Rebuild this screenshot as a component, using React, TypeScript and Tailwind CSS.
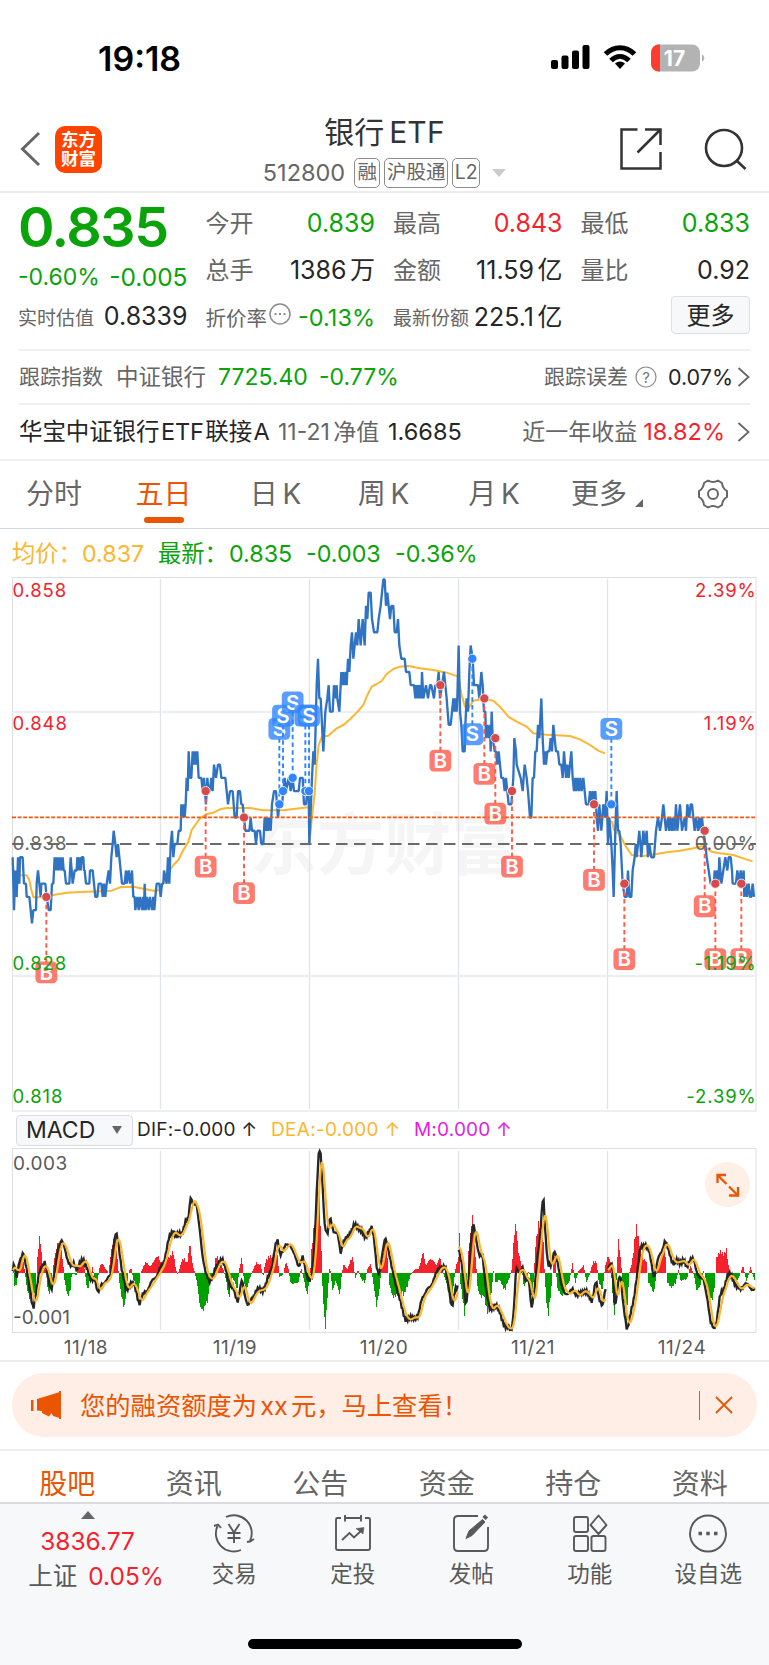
import type { ReactNode } from 'react'

const FONT = "font-['Inter','Noto_Sans_CJK_SC',sans-serif]"

type Point = [number, number]

// "x,y x,y ..." -> pairs, shifted horizontally
function parse(data: string, dx = 0): Point[] {
  return data.trim().split(/\s+/).map((p) => {
    const [x, y] = p.split(',').map(Number)
    return [x + dx, y] as Point
  })
}

// chart units: 3 per pixel. One price tick (0.001) is 39.7 units
const TICK = 39.7
const PRICE_ZERO = 804

const price = [
  ...parse(`38,-1 42,-5 46,-2 50,-4 54,-1 58,-3 60,-1 68,-1 72,-3 78,-3 80,-4 88,-4 92,-5 96,-6 100,-5 108,-5 110,-3 114,-2 118,-3 122,-4 124,-3 136,-3 140,-4 146,-5 152,-5 156,-3
  160,-3 164,-1 167,-2 170,-1 173,-2 176,-1 179,-2 182,-1 185,-2 188,-1 191,-2 194,-2 198,-3 208,-3 212,-1 218,-3 224,-2 230,-2 232,-1 236,-2 239,-1 242,-2 245,-1 250,-1 252,-2 254,-2 258,-3 268,-3 270,-2 278,-2
  282,-3 286,-4 292,-4 296,-3 304,-3 308,-4 312,-3 316,-4 320,-3 326,-2 330,-3 334,-1 338,0 341,1 346,0 350,-1 354,0 358,-1 362,-2 366,-3 374,-3 378,-2 380,-3 386,-2 390,-3 396,-2 400,-4 404,-4
  406,-5 412,-4 416,-5 420,-4 426,-5 429,-4 432,-5 434,-3 437,-5 441,-4 446,-5 450,-4 456,-5 460,-4 463,-5 466,-4 470,-3 478,-3 482,-4 486,-3 490,-3 492,-2 500,-3 504,-1 508,-3 512,0 516,1 520,-1 524,0 532,0 536,1
  542,1 544,3 547,2 550,3 554,2 557,3 560,5 563,4 566,7 570,5 574,5 578,7 582,6 585,7 588,6 592,7 596,5 604,5 608,4 612,5 615,4 618,3 622,5 626,4 630,4 634,5 638,4 642,6 648,5 654,6 660,6
  664,5 676,5 680,4 684,3 690,4 698,4 704,2 710,2 714,4 720,4 724,3 728,3 732,2 736,1 748,1 752,2 756,1 764,1 768,0 772,1 780,1 784,0 790,0 794,2 798,1 801,2 804,1 808,2 812,1 816,3 822,4
  828,4 834,2 838,3 846,3 850,4 854,5 858,4 866,5 872,4 878,5 882,4 896,4 900,5 908,5 912,3 918,3 922,4 926,4`),
  ...parse(`28,0 36,5 40,7 44,6 50,12 54,14 58,11 62,11 66,9 70,7 76,10 82,11 86,12 90,10 98,10 102,12 106,11 110,12 112,11 118,10 124,13 127,12 130,13 134,12 138,13 140,12 144,14 148,13 152,15 156,16 160,14 164,15
  168,16 172,15 176,17 182,15 188,17 194,15 198,18 202,17 206,19 212,19 216,17 222,16 232,16 236,17 242,18 246,19 250,20 254,20 258,18 262,19 266,18 270,17 274,18 280,18 284,16 290,16 294,17 298,15
  304,14 314,14 318,13 328,13 332,12 342,12 346,11 349,12 352,11 355,12 358,11 361,12 364,11 366,13 370,11 378,12 384,11 390,12 394,12 402,11 406,12 412,12 416,13 420,11 426,12 432,13 436,12 440,11 446,9 452,9 456,10
  460,11 463,10 466,11 470,10 472,11 476,15 480,10 484,9 488,7 494,7 496,9 500,11 504,10 508,13 512,15 518,14 522,12 534,12 538,11 544,13 548,12 552,10 556,10 558,8 562,9 566,8 570,9 572,7 575,10 578,8 584,7 588,7
  592,6 596,7 600,6 604,5 610,5 614,4 618,5 622,4 626,3 634,3 640,5 643,8 648,7 650,6 662,5 668,4 674,6 680,5 684,4 690,2`, 900),
  ...parse(`4,2 8,5 12,5 16,7 20,7 24,9 28,8 34,11 38,8 42,6 45,7 48,6 52,7 58,7 62,8 66,7 70,9 74,8 78,7 84,7 88,6 94,6 98,5 102,7 108,5 112,6 116,5 120,6 124,7 128,5 132,4 136,5 139,4 143,5 147,4 151,5 155,4 160,5
  164,4 168,3 176,3 180,4 184,3 188,4 192,3 196,4 200,2 204,1 208,3 214,1 220,3 226,2 230,4 234,0 238,2 244,0 248,-2 251,-4 256,1 260,4 264,1 268,1 272,0 278,-3 284,-4 290,-4 294,-2 298,-4 304,-4 308,-2 314,-1
  317,0 320,-1 324,0 328,1 334,-1 340,1 345,0 350,1 354,-1 358,0 364,-1 372,-1 378,1 384,2 390,1 396,2 400,3 404,2 408,1 414,2 418,1 422,2 426,1 430,2 434,1 438,3 442,1 446,2 450,3 456,1 464,2 468,1 472,3 478,2 482,3
  486,3 490,2 494,1 498,2 504,1 508,2 512,1 516,2 520,1 526,0 530,-1 536,-2 542,-3 552,-3 554,-2 558,-3 562,-2 565,-3 568,-1 574,-3 580,-2 586,-1 592,-2 596,-1 602,-1 606,-2 608,-3 618,-3 622,-2 628,-3 632,-2 637,-3 641,-2 643,-4
  648,-3 651,-4 656,-3 660,-4 664,-4 668,-3 672,-4`, 1590),
].map(([x, k]) => [x, PRICE_ZERO - k * TICK] as Point)

const average: Point[][] = [
  parse(`38,880 42,912 60,916 80,916 88,930 94,960 100,982 140,982 160,975 200,968 240,966 300,964 335,962 360,952 400,950 430,956 460,962 480,960 495,925 520,885 535,870 550,840 565,815 575,780 600,745
  620,732 640,728 660,718 680,714 750,714 790,721 850,721 880,717 925,712`),
  parse(`28,822 36,740 44,670 50,580 56,525 66,500 85,497 110,475 130,465 150,448 170,428 190,405 200,380 215,350 230,342 245,333 260,312 280,297 300,290 325,288 360,295 400,300 440,308 475,320
  485,375 495,410 505,415 520,392 550,386 580,392 600,410 625,440 650,455 680,470 700,490 740,494 810,498 840,508 870,525 895,542 915,550`, 900),
  parse(`232,750 246,755 252,780 270,795 285,825 305,855 340,858 375,853 410,847 450,842 490,835 520,828 545,845 570,850 610,855 640,865 668,874`, 1590),
].map((line) => line.map(([x, y]) => [x, y - 18] as Point))

const dif: Point[][] = [
  parse(`38,540 42,512 50,565 58,520 70,480 78,530 90,600 100,655 110,600 118,540 134,522 144,560 154,600 164,550 174,470 184,452 194,475 204,510 214,535 222,520 230,535 250,510 258,520 270,570 284,562
  294,615 304,580 320,575 332,550 340,470 348,430 356,465 366,540 378,605 390,580 400,580 410,610 418,640 430,615 444,595 460,570 476,545 490,520 506,450 520,420 530,440 545,430 556,395 565,390 572,318
  580,340 590,350 600,420 608,500 616,550 628,570 640,560 650,525 664,510 676,530 690,590 700,595 714,635 726,570 734,610 744,650 756,625 766,605 776,600 786,600 796,590 806,560 816,530 824,480 832,450
  840,490 850,480 860,465 870,460 880,490 896,525 908,505 918,545 928,572 936,560 944,450 952,260 957,180 961,185 966,260 974,400 982,435 990,385 1000,420 1012,430 1022,490 1030,450 1044,445 1060,405 1072,415
  1084,415 1096,450 1114,405 1122,450 1130,530 1138,550 1148,490 1156,440 1164,470 1176,540 1190,590 1204,650 1216,685 1226,690 1240,680 1254,685 1266,620 1276,610 1290,590 1305,560 1320,530 1336,535
  1346,590 1356,655 1366,600 1374,585`),
  parse(`236,470 246,530 258,650 266,560 272,470 280,400 286,430 298,500 308,500 320,610 330,665 345,640 360,670 378,715 396,715 403,640 408,540 420,545 428,530 436,580 446,560 455,655 464,600 472,500
  480,440 488,335 491,340 496,430 504,520 514,530 524,480 534,520 544,590 554,605 566,615 578,595 592,620 610,600 620,610 636,630 648,575 656,620 668,645 678,595`, 1140),
  parse(`683,540 688,520 696,520 705,660 716,560 722,560 730,650 741,718 750,680 760,640 770,560 780,480 796,460 808,490 822,560 834,510 846,480 855,450 864,480 880,520 892,515 900,515 910,510 920,535
  930,505 940,510 950,545 960,560 970,570 982,620 992,700 1001,718 1010,690 1020,620 1030,600 1042,555 1056,560 1070,590 1080,600 1094,580 1106,590 1124,598`, 1140),
]

const histogram = [
  ...parse(`38,0 40,30 44,-35 50,-35 54,0 58,40 70,35 76,0 80,-40 88,-75 96,-60 108,-70 110,0 114,60 120,105 128,25 134,15 140,0 144,-50 150,-55 158,0 164,50 174,85 184,80 192,10 194,-20 204,-65 212,-50
  216,0 230,-5 240,20 252,25 256,-5 264,-55 270,-20 278,15 284,-10 292,-50 298,15 304,25 312,20 326,0 334,60 346,120 354,30 358,-20 366,-70 374,-112 380,-40 386,0 394,15 402,-25 416,-50 422,0 436,30
  450,20 462,35 476,50 490,10 500,40 508,50 520,60 528,10 534,-5 546,35 554,40 562,30 570,90 578,25 584,5 590,-20 600,-90 612,-115 624,-80 630,-20 640,-10 648,50 662,30 672,5 680,-25 688,-75 696,-15
  706,-25 712,-50 718,10 726,50 732,-20 740,-55 750,-15 760,10 770,30 782,25 790,-10 798,40 808,50 820,40 832,75 838,-10 850,-5 858,35 866,10 872,-25 880,-35 896,-25 904,15 912,-20 922,-60 930,-20
  936,90 944,150 950,200 959,260 964,100 968,-40 976,-160 984,-60 990,25 998,-50 1008,-20 1020,-70 1026,0 1032,25 1042,10 1050,30 1060,45 1066,-20 1074,10 1084,-15 1096,-30 1102,10 1114,25 1120,-30
  1130,-95 1140,-40 1144,10`),
  ...parse(`8,40 16,100 24,30 28,-30 38,-75 50,-60 60,-60 72,-60 84,-35 92,-5 100,5 108,10 118,15 130,60 138,20 148,40 160,35 170,25 180,45 188,10 196,-20 206,-40 216,-100 224,-10 228,20 236,40 239,120
  242,-30 254,-125 262,-20 266,60 278,185 284,80 290,10 294,-50 304,-80 312,-60 324,-120 336,-50 342,15 348,-30 360,-20 376,-50 388,-15 396,10 402,100 408,165 416,60 426,15 432,-45 440,-25 448,10
  456,-80 462,-20 466,80 476,135 490,140 494,10 498,-60 505,-120 514,-60 520,30 526,50 532,-40 546,-75 558,-35 568,-30 578,30 586,-30 596,5 612,20 620,-30 632,5 640,30 650,35 656,-20 668,-50 676,20
  684,50 692,30 698,-60 705,-145 712,30 716,90 724,30 730,-60 741,-130 748,0 756,30 764,90 770,125 780,90 790,40 800,30 806,-30 822,-55 832,10 846,50 855,75 862,-30 874,-40 888,-30 896,10 902,-20
  920,-20 932,20 942,-5 950,-50 962,-35 972,10 980,-30 990,-70 997,-90 1004,-40 1010,40 1022,70 1032,50 1040,65 1048,10 1056,-10 1072,-25 1090,20 1100,-25 1112,15 1124,-20`, 1140),
]

function at(line: Point[], x: number) {
  if (x <= line[0][0]) return line[0][1]
  for (let i = 1; i < line.length; i++) {
    const [x0, y0] = line[i - 1]
    const [x1, y1] = line[i]
    if (x <= x1) return y0 + ((y1 - y0) * (x - x0)) / (x1 - x0)
  }
  return line[line.length - 1][1]
}

const noise = (x: number) => Math.sin(x * 1.7) * Math.cos(x * 0.63)

const toPath = (line: Point[]) => 'M' + line.map(([x, y]) => `${x.toFixed(1)} ${y.toFixed(1)}`).join('L')

function sample(line: Point[], step: number, fn: (x: number) => number) {
  const out: Point[] = []
  for (let x = line[0][0]; x <= line[line.length - 1][0]; x += step) out.push([x, fn(x)])
  return out
}

const difLines = dif.map((l) => sample(l, 3, (x) => Math.min(718, at(l, x) + noise(x) * 10)))
// signal line: trailing mean of the fast one
const deaLines = dif.map((l) =>
  sample(l, 3, (x) => {
    let sum = 0
    for (let i = 0; i < 8; i++) sum += at(l, x - i * 2)
    return sum / 8
  })
)

const bars = sample(histogram, 3, (x) => at(histogram, x) * (1 + 0.16 * noise(x)))

const dayLines = [160.5, 309.5, 458.5, 607.5]

type Marker = { kind: 'B' | 'S'; x: number; k: number; dir: 1 | -1 }

const markers: Marker[] = [
  ...[[139, -4], [617, 4], [732, 2], [1321, 12], [1453, 11], [1486, 8], [1536, 4], [1782, 3], [1873, -3], [2114, 1], [2146, -3], [2224, -3]].map(
    ([x, k]) => ({ kind: 'B', x, k, dir: 1 }) as Marker
  ),
  ...[[838, 3], [849, 4], [878, 5], [916, 4], [927, 4], [1834, 3]].map(([x, k]) => ({ kind: 'S', x, k, dir: -1 }) as Marker),
  { kind: 'S', x: 1417, k: 14, dir: 1 },
]

function TradeMarker({ kind, x, k, dir }: Marker) {
  const cx = x / 3
  const cy = (PRICE_ZERO - k * TICK) / 3
  const by = cy + dir * 75.5
  const buy = kind === 'B'
  const color = buy ? '#ff5a48' : '#2f86ff'
  return (
    <g>
      <line x1={cx} x2={cx} y1={cy} y2={by - dir * 10} stroke={color} strokeWidth="1.9" strokeDasharray="4.5 3.2" />
      <circle cx={cx} cy={cy} r="4.6" fill={buy ? '#d84a4a' : '#2f86ff'} stroke="#fff" strokeWidth="0.8" />
      <rect x={cx - 10.9} y={by - 10.9} width="21.8" height="21.8" rx="4.5" fill={color} opacity="0.8" />
      <text x={cx} y={by + 7.2} textAnchor="middle" fontSize="20.5" fontWeight="600" fill="#fff">{kind}</text>
    </g>
  )
}

function PriceChart() {
  return (
    <svg width="769" height="536" className={`block ${FONT}`} fontSize="18.5">
      <text x="250" y="293" fontSize="67" fontWeight="700" fill="#f5f5f5" textLength="268">东方财富</text>
      <rect x="12.5" y="1.5" width="743.5" height="533.5" fill="none" stroke="#dcdfe6" />
      {dayLines.map((x) => <line key={x} x1={x} x2={x} y1="3" y2="533" stroke="#e1e4ec" strokeWidth="1.3" />)}
      <path d="M12 136H756M12 400H756" stroke="#e6e9ef" strokeWidth="1.5" />
      <path d="M12 268H756" stroke="#6b6b6b" strokeWidth="2" strokeDasharray="11.5 6.5" />
      {average.map((l, i) => <path key={i} d={toPath(l)} transform="scale(.33333)" fill="none" stroke="#fcb62f" strokeWidth="6" strokeLinejoin="round" />)}
      <path d={toPath(price)} transform="scale(.33333)" fill="none" stroke="#2f73c2" strokeWidth="7" strokeLinejoin="bevel" />
      <path d="M12 241.4H756" stroke="#ee5a10" strokeWidth="1.9" strokeDasharray="4 1.6" />
      {markers.map((m, i) => <TradeMarker key={i} {...m} />)}
      <g fill="#f5222d" letterSpacing="0.85">
        <text x="12.5" y="20.5">0.858</text>
        <text x="12.5" y="154">0.848</text>
        <text x="756.5" y="20.5" textAnchor="end">2.39%</text>
        <text x="756.5" y="154" textAnchor="end">1.19%</text>
      </g>
      <g fill="#666" letterSpacing="0.85">
        <text x="12.5" y="273.5">0.838</text>
        <text x="756.5" y="273.5" textAnchor="end">0.00%</text>
      </g>
      <g fill="#0aa30a" letterSpacing="0.85">
        <text x="12.5" y="394">0.828</text>
        <text x="12.5" y="527">0.818</text>
        <text x="756.5" y="394" textAnchor="end">-1.19%</text>
        <text x="756.5" y="527" textAnchor="end">-2.39%</text>
      </g>
    </svg>
  )
}

function MacdChart() {
  return (
    <svg width="769" height="212" className={`block ${FONT}`} fontSize="19">
      <rect x="12.5" y="0.5" width="743.5" height="184" fill="none" stroke="#dcdfe6" />
      {dayLines.map((x) => <line key={x} x1={x} x2={x} y1="3" y2="182" stroke="#e1e4ec" strokeWidth="1.3" />)}
      <g transform="translate(0,-58) scale(.33333)">
        {bars.map(([x, v], i) => (
          <rect key={i} x={x - 2} y={v > 0 ? 548 - v : 548} width="3.6" height={Math.abs(v) + 2} fill={v > 0 ? '#f5222d' : '#00a000'} shapeRendering="crispEdges" />
        ))}
        {difLines.map((l, i) => <path key={i} d={toPath(l)} fill="none" stroke="#262626" strokeWidth="7" />)}
        {deaLines.map((l, i) => <path key={i} d={toPath(l)} fill="none" stroke="#fcb62f" strokeWidth="6.5" strokeLinejoin="round" />)}
      </g>
      <g fill="#595959">
        <text x="13" y="22" letterSpacing="0.5">0.003</text>
        <text x="13" y="176">-0.001</text>
        {['11/18', '11/19', '11/20', '11/21', '11/24'].map((d, i) => (
          <text key={d} x={86 + i * 149} y="206" textAnchor="middle" letterSpacing="0.5">{d}</text>
        ))}
      </g>
      <circle cx="727.5" cy="36.5" r="22.5" fill="#feefe7" />
      <path d="M717.5 35V27H726M717.5 27L726.500 36M738 39V47.500H729M738 47.500L729 38.500" fill="none" stroke="#ea5504" strokeWidth="2.300" />
    </svg>
  )
}

function Stat({ label, small, children, color = 'text-[#262626]' }: { label: string; small?: boolean; children: ReactNode; color?: string }) {
  return (
    <div className="flex h-[47px] items-center justify-between whitespace-nowrap">
      <span className={`text-[#666] ${small ? 'pt-1 text-[19px]' : 'text-[24px]'}`}>{label}</span>
      <span className={`text-[25px] [word-spacing:-3.5px] ${color}`}>{children}</span>
    </div>
  )
}

function Chevron() {
  return (
    <svg width="13" height="20" viewBox="0 0 13 20" fill="none" stroke="#666" strokeWidth="1.8"><path d="M1.500 1L11.500 10L1.500 19" /></svg>
  )
}

function StatusBar() {
  return (
    <div className="flex h-[104px] items-center pt-[12px] pl-[98px]">
      <span className="w-[453px] text-[34px] font-semibold text-black">19:18</span>
      <svg width="154" height="28" viewBox="0 0 154 28">
        <rect x="0" y="16" width="7" height="9" rx="2" />
        <rect x="10.5" y="11.5" width="7" height="13.5" rx="2" />
        <rect x="21" y="6.5" width="7" height="18.5" rx="2" />
        <rect x="31.5" y="1" width="7" height="24" rx="2" />
        <g fill="none" stroke="#000" strokeWidth="5">
          <path d="M54.500 10C63 1.500 75 1.500 83.500 10" />
          <path d="M60 16.500C65.500 11 72.500 11 78 16.500" />
        </g>
        <path d="M69 25L64 19.500C67 16.700 71 16.700 74 19.500Z" />
        <rect x="100" y="0.5" width="49" height="27" rx="8" fill="#b3b3b3" />
        <path d="M109 .5H108A8 8 0 0 0 100 8.500V19.500A8 8 0 0 0 108 27.500H109Z" fill="#ff3b30" />
        <path d="M151 10.500C154 11.500 154 16.500 151 17.500Z" fill="#b3b3b3" />
        <text x="123.500" y="21.500" fontSize="21" fontWeight="700" fill="#fff" textAnchor="middle">17</text>
      </svg>
    </div>
  )
}

function Header() {
  const tag = 'flex h-[30px] items-center justify-center rounded-[5px] border border-[#8c8c8c] text-[19.5px]'
  return (
    <header className="grid h-[89px] grid-cols-[1fr_auto_1fr] items-center border-b-2 border-[#eee]">
      <div className="flex items-center gap-3.5 pl-5">
        <svg width="21" height="36" viewBox="0 0 20 36" fill="none" stroke="#666" strokeWidth="3"><path d="M18.500 2L2 18L18.500 34" /></svg>
        <div className="flex h-[47px] w-[47px] flex-col items-center justify-center rounded-[10px] bg-[#ff4400] text-[17.5px] leading-[19px] font-bold text-white">
          <span>东方</span>
          <span>财富</span>
        </div>
      </div>
      <div className="flex flex-col items-center pt-[9px] text-[#666]">
        <h1 className="flex h-[38px] items-center gap-[5px] text-[30px] text-[#333]">银行<span className="tracking-[0.2px]">ETF</span></h1>
        <div className="flex h-[43px] items-center gap-1">
          <span className="mr-[5px] text-[23.5px]">512800</span>
          <span className={`${tag} w-[26px]`}>融</span>
          <span className={`${tag} w-[64px]`}>沪股通</span>
          <span className={`${tag} w-[28px]`}>L2</span>
          <svg width="14" height="8" className="ml-2"><path d="M0 0H14L7 8Z" fill="#ccc" /></svg>
        </div>
      </div>
      <div className="flex items-center justify-end gap-[42px] pr-[22px]">
        <svg width="42" height="42" viewBox="0 0 42 42" fill="none" stroke="#333" strokeWidth="2.5">
          <path d="M17.500 1.500H1.500V40.500H40.500V24M25 1.500H40.500V17M40.500 1.500L17.500 24.500" />
        </svg>
        <svg width="43" height="42" viewBox="0 0 43 42" fill="none" stroke="#333" strokeWidth="2.6">
          <circle cx="20" cy="20" r="18" /><path d="M32.500 32.500L41.500 41" />
        </svg>
      </div>
    </header>
  )
}

function Quote() {
  const green = 'text-[#0aa30a]'
  const red = 'text-[#f5222d]'
  return (
    <section className="px-[19px]">
      <div className="grid h-[156px] grid-cols-4 gap-x-[19px] pt-[7px]">
        <div className="-ml-px">
          <div className={`h-[56px] text-[55.5px] leading-[54px] font-semibold tracking-[-1.5px] ${green}`}>0.835</div>
          <div className={`flex h-[42px] items-center justify-between text-[23px] whitespace-nowrap ${green}`}><span>-0.60%</span><span className="text-[24.5px]">-0.005</span></div>
          <div className="flex h-[38px] items-center justify-between whitespace-nowrap">
            <span className="pt-1 text-[19px] text-[#666]">实时估值</span>
            <span className="text-[25px] text-[#262626]">0.8339</span>
          </div>
        </div>
        <div className="-ml-px">
          <Stat label="今开" color={green}>0.839</Stat>
          <Stat label="总手">1386 万</Stat>
          <div className="flex h-[47px] items-center justify-between whitespace-nowrap">
            <span className="flex pt-1 text-[20.5px] text-[#666]">
              折价率
              <svg width="24" height="24" viewBox="0 0 24 24" className="-mt-0.5" fill="none" stroke="#8c8c8c" strokeWidth="1.5">
                <circle cx="13" cy="12" r="10" />
                <path d="M7.500 12H9.500M12 12H14M16.500 12H18.500" strokeWidth="2" />
              </svg>
            </span>
            <span className={`text-[23.5px] ${green}`}>-0.13%</span>
          </div>
        </div>
        <div className="-ml-px">
          <Stat label="最高" color={red}>0.843</Stat>
          <Stat label="金额">11.59 亿</Stat>
          <Stat label="最新份额" small>225.1 亿</Stat>
        </div>
        <div className="-ml-px">
          <Stat label="最低" color={green}>0.833</Stat>
          <Stat label="量比">0.92</Stat>
          <div className="flex justify-end pt-[2px]">
            <button className="h-[38px] w-[79px] rounded-[4px] border border-[#dcdfe6] bg-[#f7f8fa] text-[24px] leading-[38px] text-[#262626]">更多</button>
          </div>
        </div>
      </div>
      <div className="flex h-[54px] items-center border-t-2 border-[#f0f0f0] text-[22.5px] whitespace-nowrap text-[#666]">
        <span className="w-[97px] text-[21px]">跟踪指数</span>
        <span className="w-[102px]">中证银行</span>
        <span className={`w-[101px] text-[23px] ${green}`}>7725.40</span>
        <span className={`text-[23px] ${green}`}>-0.77%</span>
        <span className="ml-auto text-[21px]">跟踪误差</span>
        <svg width="22" height="22" viewBox="0 0 22 22" className="mr-[11px] ml-[7px]">
          <circle cx="11" cy="11" r="10" fill="none" stroke="#8c8c8c" strokeWidth="1.2" />
          <text x="11" y="16.500" fontSize="15" fill="#777" textAnchor="middle">?</text>
        </svg>
        <span className="mr-1 text-[21.5px] text-[#262626]">0.07%</span>
        <Chevron />
      </div>
      <div className="flex h-[56px] items-center border-t-2 border-[#f0f0f0] text-[23px] whitespace-nowrap text-[#666]">
        <span className="w-[259px] text-[23.5px] tracking-[-0.1px] text-[#262626] [word-spacing:-5px]">华宝中证银行 ETF 联接 A</span>
        <span className="w-[110px] [word-spacing:-3px]">11-21 净值</span>
        <span className="text-[23.5px] text-[#262626]">1.6685</span>
        <span className="ml-auto">近一年收益</span>
        <span className={`mr-3 ml-1.5 text-[23.5px] ${red}`}>18.82%</span>
        <Chevron />
      </div>
    </section>
  )
}

function PeriodTabs() {
  return (
    <nav className="flex h-[70px] items-center border-t-2 border-b border-t-[#f0f0f0] border-b-[#d3d7de] pb-0.5 text-[28px] text-[#666] [word-spacing:-3px]">
      <span className="w-[109px] pl-[26px]">分时</span>
      <span className="relative flex w-[109px] justify-center text-[#ea5504]">
        五日
        <i className="absolute -bottom-[8px] h-[6px] w-[40px] rounded-full bg-[#ea5504]" />
      </span>
      <span className="w-[115px] text-center">日 K</span>
      <span className="w-[101px] text-center">周 K</span>
      <span className="w-[120px] text-center">月 K</span>
      <span className="flex w-[143px] items-end gap-2 pl-[17px]">
        更多
        <svg width="8" height="8" className="mb-2"><path d="M8 0V8H0Z" fill="#666" /></svg>
      </span>
      <svg width="32" height="32" viewBox="0 0 32 32" fill="none" stroke="#666" strokeWidth="2">
        <path d="M11 2.500Q16 5.500 21 2.500L25 5Q25.500 10.500 30 13V19Q25.500 21.500 25 27L21 29.500Q16 26.500 11 29.500L7 27Q6.500 21.500 2 19V13Q6.500 10.500 7 5Z" strokeLinejoin="round" />
        <circle cx="16" cy="16" r="5" />
      </svg>
    </nav>
  )
}

function IndicatorBar() {
  return (
    <div className="flex h-[36px] items-center pl-4 text-[19px] whitespace-nowrap">
      <div className="mr-[4px] flex h-[31px] w-[117px] items-center justify-between rounded-[4px] border border-[#d9dce3] bg-[#f7f8fa] pr-2.5 pl-[9px] text-[23px] text-[#262626]">
        MACD
        <svg width="10" height="8"><path d="M0 0H10L5 8Z" fill="#666" /></svg>
      </div>
      <span className="w-[134px] tracking-[0.2px] text-[#262626]">DIF:-0.000 ↑</span>
      <span className="w-[143px] tracking-[0.3px] text-[#fcb62f]">DEA:-0.000 ↑</span>
      <span className="tracking-[0.2px] text-[#e01fe0]">M:0.000 ↑</span>
    </div>
  )
}

function Banner() {
  return (
    <div className="border-y-2 border-[#eee] px-3 pt-[11px] pb-[12px]">
      <div className="flex h-[64px] items-center rounded-full bg-[#feeee6] pr-[24px] pl-[19px] text-[#ea5504]">
        <svg width="31" height="28" viewBox="0 0 31 28" fill="currentColor">
          <path d="M0 9H2.500V20H0ZM6 8L29 1V27L22 25L20.500 22L18 25.500L11 22V20L6 19.500Z" /><rect x="28" width="2" height="28" />
        </svg>
        <span className="ml-[18px] pt-0.5 text-[25.3px] [word-spacing:-4px]">您的融资额度为 xx 元，马上查看！</span>
        <i className="mr-[15px] ml-auto h-[29px] w-[1.5px] bg-[#ea5504]" />
        <svg width="18" height="18" fill="none" stroke="currentColor" strokeWidth="1.8"><path d="M1 1L17 17M17 1L1 17" /></svg>
      </div>
    </div>
  )
}

const icons = {
  trade: (
    <>
      <path d="M13 4A18 18 0 0 1 37 28M28 37A18 18 0 0 1 4.500 13M1 13L5 11.500L8 15M34 29L37 28.500L41 26" />
      <path d="M15.500 11L21 19.500L26.500 11M21 19.500V30M14.500 20H27.500M14.500 25H27.500" />
    </>
  ),
  plan: (
    <>
      <path d="M9 5H5.500Q4 5 4 6.500V35Q4 37 6 37H36Q38 37 38 35V6.500Q38 5 36.500 5H33M13 5H29M13 2V8.500M29 2V8.500" />
      <path d="M10 27L17.500 20L22 24.500L30 17" /><path d="M24 15.500L32 14.500L31 21Z" fill="#595959" strokeWidth="0.5" />
    </>
  ),
  post: (
    <>
      <path d="M28 3H8Q4 3 4 7V34Q4 38 8 38H34Q38 38 38 34V14" />
      <path d="M16 25.500L19 18L32.500 6.500L35 9L22 22.500Z" fill="#595959" strokeWidth="1" /><path d="M34 5.500L36.500 3" strokeWidth="4.5" />
    </>
  ),
  grid: (
    <>
      <rect x="5" y="4" width="14" height="15" rx="2" /><rect x="5" y="23" width="14" height="15" rx="2" /><rect x="22.5" y="23" width="14" height="15" rx="2" />
      <path d="M29.500 2.500L37.500 12L29.500 21L21.500 12Z" strokeLinejoin="round" />
    </>
  ),
  more: (
    <>
      <circle cx="21" cy="20.5" r="18" /><path d="M11.500 20.500H15M19.250 20.500H22.750M27 20.500H30.500" strokeWidth="3.5" />
    </>
  ),
}

function BottomBar() {
  const items: [keyof typeof icons, string][] = [['trade', '交易'], ['plan', '定投'], ['post', '发帖'], ['grid', '功能'], ['more', '设自选']]
  return (
    <footer className="flex h-[163px] flex-col items-center justify-between border-t-2 border-[#d9dbe0] bg-[#f7f8fa] pb-4">
      <div className="flex w-full text-[#595959]">
        <div className="flex w-[175px] flex-col items-center pt-[7px] text-[#f5222d]">
          <svg width="14" height="8"><path d="M0 8L7 0L14 8Z" fill="#666" /></svg>
          <span className="mt-[5px] h-[34px] text-[24.5px] leading-[34px]">3836.77</span>
          <span className="flex h-[36px] items-center gap-[11px] pl-[17px] text-[24.5px]"><span className="text-[#595959]">上证</span>0.05%</span>
        </div>
        {items.map(([icon, label]) => (
          <div key={icon} className="flex w-[118.5px] flex-col items-center pt-[9px]">
            <svg width="42" height="42" viewBox="0 0 42 42" fill="none" stroke="#595959" strokeWidth="1.9">{icons[icon]}</svg>
            <span className="mt-[2px] h-[34px] text-[22.5px] leading-[34px]">{label}</span>
          </div>
        ))}
      </div>
      <div className="h-[10px] w-[274px] rounded-full bg-black" />
    </footer>
  )
}

export default function App() {
  return (
    <div className={`h-[1665px] w-[769px] overflow-hidden bg-white ${FONT}`}>
      <StatusBar />
      <Header />
      <Quote />
      <PeriodTabs />
      <div className="flex h-[47px] items-center pt-[3px] pl-3 text-[23.3px] whitespace-nowrap text-[#0aa30a]">
        <span className="w-[70px] text-[#fcb62f]">均价：</span>
        <span className="w-[76px] text-[#fcb62f]">0.837</span>
        <span className="w-[71px]">最新：</span>
        <span className="w-[77px]">0.835</span>
        <span className="w-[89px]">-0.003</span>
        <span>-0.36%</span>
      </div>
      <PriceChart />
      <IndicatorBar />
      <MacdChart />
      <Banner />
      <nav className="flex h-[51px] items-end justify-around overflow-hidden pr-[6px] pl-[4px] text-[28px] leading-[35px] text-[#666]">
        <span className="text-[#ea5504]">股吧</span>
        <span>资讯</span>
        <span>公告</span>
        <span>资金</span>
        <span>持仓</span>
        <span>资料</span>
      </nav>
      <BottomBar />
    </div>
  )
}
